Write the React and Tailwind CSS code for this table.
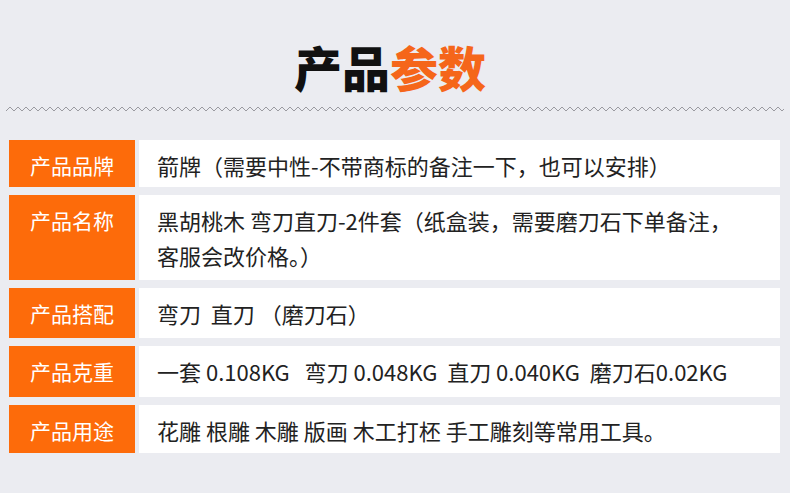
const rows = [
  { label: '产品品牌', h: 'h-[47px]', text: ['箭牌（需要中性-不带商标的备注一下，也可以安排）'] },
  { label: '产品名称', h: 'h-[85px]', text: ['黑胡桃木 弯刀直刀-2件套（纸盒装，需要磨刀石下单备注，', '客服会改价格。）'] },
  { label: '产品搭配', h: 'h-[50px]', text: ['弯刀  直刀 （磨刀石）'] },
  { label: '产品克重', h: 'h-[51px]', text: ['一套 0.108KG   弯刀 0.048KG  直刀 0.040KG  磨刀石0.02KG'] },
  { label: '产品用途', h: 'h-[48px]', text: ['花雕 根雕 木雕 版画 木工打柸 手工雕刻等常用工具。'] },
]

const Wave = () => (
  <svg width="778" height="8" viewBox="0 0 778 8" className="block">
    <defs>
      <pattern id="zig" width="8" height="8" patternUnits="userSpaceOnUse">
        <polyline points="0,6 4,2 8,6" fill="none" stroke="#9a9aa0" strokeWidth="1" />
      </pattern>
    </defs>
    <rect x="0" y="0" width="778" height="8" fill="url(#zig)" />
  </svg>
)

const App = () => {
  return (
    <div
      className="w-[790px] h-[493px] bg-[#ebecf1] overflow-hidden"
      style={{ fontFamily: '"Noto Sans CJK SC", "Noto Sans", sans-serif' }}
    >
      <h1 className="pt-[42px] pr-[10px] text-center text-[48px] leading-[48px] font-black text-[#111]">
        产品<span className="text-[#f5661a]">参数</span>
      </h1>

      <div className="mt-[15px] pl-[6px]">
        <Wave />
      </div>

      <div className="mt-[27px] flex flex-col gap-[8px] pl-[9px] pr-[10px]">
        {rows.map((row) => (
          <div key={row.label} className={`flex gap-[4px] ${row.h}`}>
            <div className="w-[126px] shrink-0 bg-[#fd6b0a] text-white text-[21px] leading-[35px] pt-[8px] text-center">
              {row.label}
            </div>
            <div className="flex-1 bg-white text-[#222] text-[22px] leading-[35px] pt-[8px] pl-[18px] whitespace-pre">
              {row.text.map((line, i) => (
                <div key={i}>{line}</div>
              ))}
            </div>
          </div>
        ))}
      </div>
    </div>
  )
}

export default App
